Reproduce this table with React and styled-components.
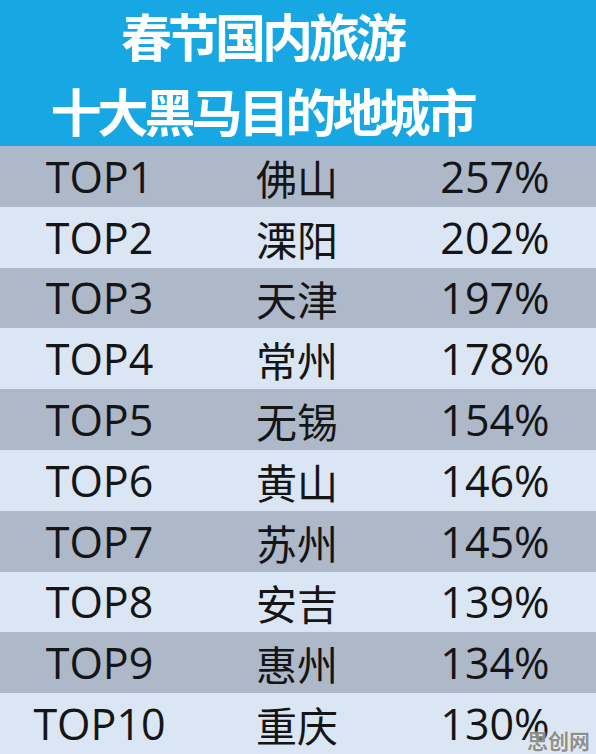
import React from "react";
import styled, { createGlobalStyle } from "styled-components";

const GlobalStyle = createGlobalStyle`
  html, body {
    margin: 0;
    padding: 0;
  }
  body {
    font-family: "Open Sans", "Noto Sans CJK SC", sans-serif;
  }
`;

const Page = styled.div`
  position: relative;
  width: 596px;
  height: 754px;
  display: flex;
  flex-direction: column;
  overflow: hidden;
`;

const Header = styled.div`
  height: 146px;
  flex: none;
  background: #17a8e3;
  color: #ffffff;
  display: flex;
  flex-direction: column;
  align-items: center;
  justify-content: center;
  padding-right: 72px;
  box-sizing: border-box;
  font-family: "Noto Sans CJK SC", sans-serif;
  font-weight: 700;
  font-size: 51px;
  letter-spacing: -4px;
  line-height: 75px;
`;

const Row = styled.div`
  flex: 1 1 0;
  min-height: 0;
  display: grid;
  grid-template-columns: 198px 198px 1fr;
  align-items: center;
  line-height: 1;
  background: ${(p) => (p.$alt ? "#dae6f3" : "#adb8c9")};
  color: #151515;
`;

const Rank = styled.div`
  text-align: center;
  font-family: "Open Sans", sans-serif;
  font-size: 43px;
  padding-left: 1px;
`;

const City = styled.div`
  text-align: center;
  font-family: "Noto Sans CJK SC", sans-serif;
  font-size: 41px;
  padding-top: 2px;
`;

const Percent = styled.div`
  text-align: center;
  font-family: "Open Sans", sans-serif;
  font-size: 43px;
  padding-right: 2px;
`;

const Watermark = styled.div`
  position: absolute;
  right: 6px;
  bottom: 3px;
  font-family: "Noto Sans CJK SC", sans-serif;
  font-weight: 700;
  font-size: 21px;
  line-height: 1;
  color: rgba(125, 125, 125, 0.85);
  text-shadow: 0 0 2px rgba(255, 255, 255, 0.9);
`;

const data = [
  ["TOP1", "佛山", "257%"],
  ["TOP2", "溧阳", "202%"],
  ["TOP3", "天津", "197%"],
  ["TOP4", "常州", "178%"],
  ["TOP5", "无锡", "154%"],
  ["TOP6", "黄山", "146%"],
  ["TOP7", "苏州", "145%"],
  ["TOP8", "安吉", "139%"],
  ["TOP9", "惠州", "134%"],
  ["TOP10", "重庆", "130%"],
];

export default function App() {
  return (
    <Page>
      <GlobalStyle />
      <Header>
        <div>春节国内旅游</div>
        <div>十大黑马目的地城市</div>
      </Header>
      {data.map((row, i) => (
        <Row key={row[0]} $alt={i % 2 === 1}>
          <Rank>{row[0]}</Rank>
          <City>{row[1]}</City>
          <Percent>{row[2]}</Percent>
        </Row>
      ))}
      <Watermark>思创网</Watermark>
    </Page>
  );
}
